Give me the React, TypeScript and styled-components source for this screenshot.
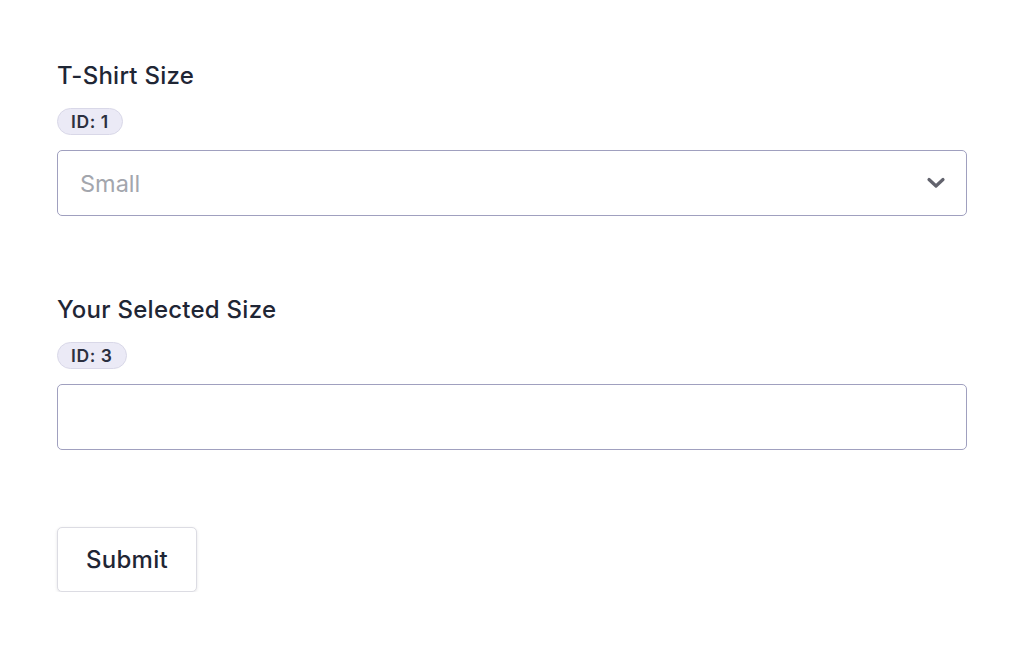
import React from "react";
import styled, { createGlobalStyle } from "styled-components";

const Global = createGlobalStyle`
  html, body { margin: 0; padding: 0; background: #ffffff; }
  body { font-family: Inter, "Noto Sans", sans-serif; color: #1f2635; }
  * { box-sizing: border-box; }
`;

const Page = styled.form`
  display: flex;
  flex-direction: column;
  padding: 61px 57px 0 57px;
  width: 1024px;
`;

const Field = styled.div`
  display: flex;
  flex-direction: column;
  align-items: flex-start;
  margin-bottom: 79px;
`;

const Label = styled.label`
  font-size: 24px;
  line-height: 30px;
  font-weight: 500;
  letter-spacing: 0.25px;
  color: #1f2635;
`;

const Badge = styled.span`
  display: inline-flex;
  align-items: center;
  height: 27px;
  margin-top: 17px;
  padding: 0 13px;
  border-radius: 14px;
  background: #ebeaf6;
  border: 1px solid #d9d8e8;
  font-size: 17.5px;
  font-weight: 600;
  letter-spacing: 0.6px;
  color: #2b3040;
`;

const Control = styled.div`
  position: relative;
  width: 100%;
  height: 66px;
  margin-top: 15px;
  border: 1px solid #a0a0bf;
  border-radius: 5px;
  background: #fff;
  display: flex;
  align-items: center;
  padding: 0 22px;
`;

const Placeholder = styled.span`
  font-size: 23.5px;
  color: #a3a6ad;
  flex: 1;
`;

const Chevron = styled.svg`
  width: 20px;
  height: 14px;
  margin-right: -2px;
`;

const Button = styled.button`
  align-self: flex-start;
  width: 140px;
  height: 65px;
  margin-top: -2px;
  padding: 0;
  border: 1px solid #dcdce3;
  border-radius: 5px;
  background: #fff;
  box-shadow: 0 1px 3px rgba(30, 30, 60, 0.12);
  font-family: Inter, "Noto Sans", sans-serif;
  font-size: 24px;
  font-weight: 500;
  letter-spacing: 0.3px;
  color: #1f2635;
`;

export default function App() {
  return (
    <>
      <Global />
      <Page onSubmit={(e) => e.preventDefault()}>
        <Field>
          <Label>T-Shirt Size</Label>
          <Badge>ID: 1</Badge>
          <Control>
            <Placeholder>Small</Placeholder>
            <Chevron viewBox="0 0 20 14">
              <path d="M3 3.5 L10 10 L17 3.5" fill="none" stroke="#62636d" strokeWidth="3.2" strokeLinecap="round" strokeLinejoin="round" />
            </Chevron>
          </Control>
        </Field>
        <Field>
          <Label>Your Selected Size</Label>
          <Badge>ID: 3</Badge>
          <Control />
        </Field>
        <Button type="submit">Submit</Button>
      </Page>
    </>
  );
}
